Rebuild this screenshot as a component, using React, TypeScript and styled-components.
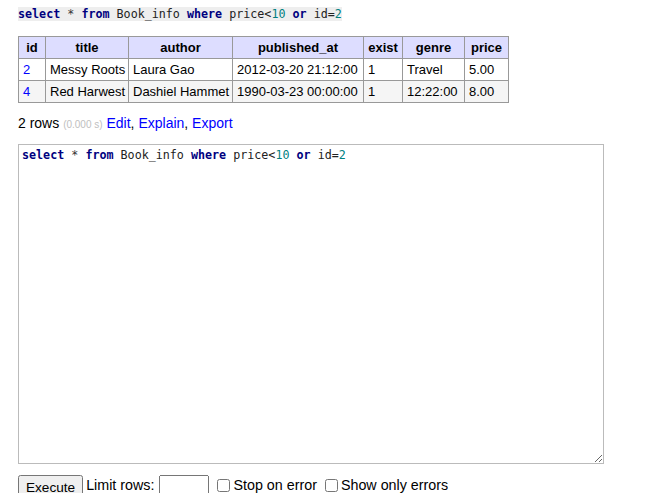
import React from "react";
import styled, { createGlobalStyle } from "styled-components";

const GlobalStyle = createGlobalStyle`
  html, body {
    margin: 0;
    padding: 0;
    background: #fff;
  }
  body {
    font-family: "Liberation Sans", Arial, sans-serif;
    font-size: 14px;
    color: #000;
  }
`;

interface Row {
  id: string;
  title: string;
  author: string;
  published_at: string;
  exist: string;
  genre: string;
  price: string;
}

// column name + width as the result grid shows it
const columns: [string, number][] = [
  ["id", 27],
  ["title", 83],
  ["author", 104],
  ["published_at", 131],
  ["exist", 39],
  ["genre", 62],
  ["price", 44],
];

const rows: Row[] = [
  {
    id: "2",
    title: "Messy Roots",
    author: "Laura Gao",
    published_at: "2012-03-20 21:12:00",
    exist: "1",
    genre: "Travel",
    price: "5.00",
  },
  {
    id: "4",
    title: "Red Harwest",
    author: "Dashiel Hammet",
    published_at: "1990-03-23 00:00:00",
    exist: "1",
    genre: "12:22:00",
    price: "8.00",
  },
];

// highlighted sql, same as jush does it
const Sql = () => (
  <>
    <Kw>select</Kw> <Op>*</Op> <Kw>from</Kw> Book_info <Kw>where</Kw> price&lt;
    <Num>10</Num> <Kw>or</Kw> id=<Num>2</Num>
  </>
);

const App = () => {
  return (
    <Page>
      <GlobalStyle />
      <QueryLine>
        <Code>
          <Sql />
        </Code>
      </QueryLine>

      <ResultTable>
        <thead>
          <tr>
            {columns.map(([c, w]) => (
              <Th key={c} w={w}>
                {c}
              </Th>
            ))}
          </tr>
        </thead>
        <tbody>
          {rows.map((r, i) => (
            <Tr key={r.id} odd={i % 2 === 1}>
              <Td>
                <IdLink href="#">{r.id}</IdLink>
              </Td>
              <Td>{r.title}</Td>
              <Td>{r.author}</Td>
              <Td>{r.published_at}</Td>
              <Td>{r.exist}</Td>
              <Td>{r.genre}</Td>
              <Td>{r.price}</Td>
            </Tr>
          ))}
        </tbody>
      </ResultTable>

      <Summary>
        2 rows <Time>(0.000 s)</Time> <Link href="#">Edit</Link>,{" "}
        <Link href="#">Explain</Link>, <Link href="#">Export</Link>
      </Summary>

      <SqlArea>
        <Sql />
      </SqlArea>

      <Controls>
        <Button type="button">Execute</Button>
        <span>Limit rows:</span>
        <LimitInput type="text" />
        <CheckLabel>
          <Check type="checkbox" />
          Stop on error
        </CheckLabel>
        <CheckLabel>
          <Check type="checkbox" />
          Show only errors
        </CheckLabel>
      </Controls>
    </Page>
  );
};

export default App;

const Page = styled.div`
  padding: 6px 0 0 18px;
  width: 632px;
  height: 487px;
  overflow: hidden;
`;

const QueryLine = styled.p`
  margin: 0 0 15px 0;
  line-height: 14px;
`;

const Code = styled.code`
  font-family: "DejaVu Sans Mono", monospace;
  font-size: 11.7px;
  background: #eee;
  color: #222;
`;

const Kw = styled.span`
  color: navy;
  font-weight: bold;
`;

const Op = styled.span`
  color: #333;
`;

const Num = styled.span`
  color: #007f7f;
`;

const ResultTable = styled.table`
  border-collapse: collapse;
  border: 1px solid #999;
  font-size: 13px;
  margin: 0;
  table-layout: fixed;
  width: 490px;
`;

const Th = styled.th<{ w: number }>`
  width: ${(p) => p.w}px;
  box-sizing: border-box;
  background: #ddf;
  border: 1px solid #999;
  padding: 3px 4px;
  line-height: 15px;
  font-weight: bold;
  text-align: center;
`;

const Tr = styled.tr<{ odd: boolean }>`
  background: ${(p) => (p.odd ? "#f5f5f5" : "#fff")};
`;

const Td = styled.td`
  border: 1px solid #999;
  padding: 3px 4px;
  line-height: 15px;
  text-align: left;
  white-space: nowrap;
  overflow: hidden;
`;

const IdLink = styled.a`
  color: #00f;
  text-decoration: none;
`;

const Summary = styled.p`
  margin: 12px 0 11px 0;
  line-height: 17px;
`;

const Time = styled.span`
  color: silver;
  font-size: 10px;
`;

const Link = styled.a`
  color: #00f;
  text-decoration: none;
`;

const SqlArea = styled.pre`
  margin: 0;
  box-sizing: border-box;
  width: 586px;
  height: 320px;
  border: 1px solid #bbb;
  padding: 3px 3px;
  font-family: "DejaVu Sans Mono", monospace;
  font-size: 11.7px;
  line-height: 15px;
  color: #222;
  overflow: auto;
  resize: both;
  white-space: pre-wrap;
`;

const Controls = styled.div`
  display: flex;
  align-items: flex-start;
  margin-top: 11px;
  font-size: 14.3px;
  line-height: 20px;
`;

const Button = styled.button`
  font-family: "Liberation Sans", Arial, sans-serif;
  font-size: 13.6px;
  height: 22px;
  padding: 3px 6px 0;
  margin: 0 3px 0 0;
`;

const LimitInput = styled.input`
  box-sizing: border-box;
  width: 50px;
  height: 21px;
  font-size: 13px;
  margin: 0 8px 0 5px;
`;

const CheckLabel = styled.label`
  display: inline-flex;
  align-items: center;
  margin-right: 8px;
`;

const Check = styled.input`
  margin: 1px 3px 0 0;
  width: 13px;
  height: 13px;
`;
